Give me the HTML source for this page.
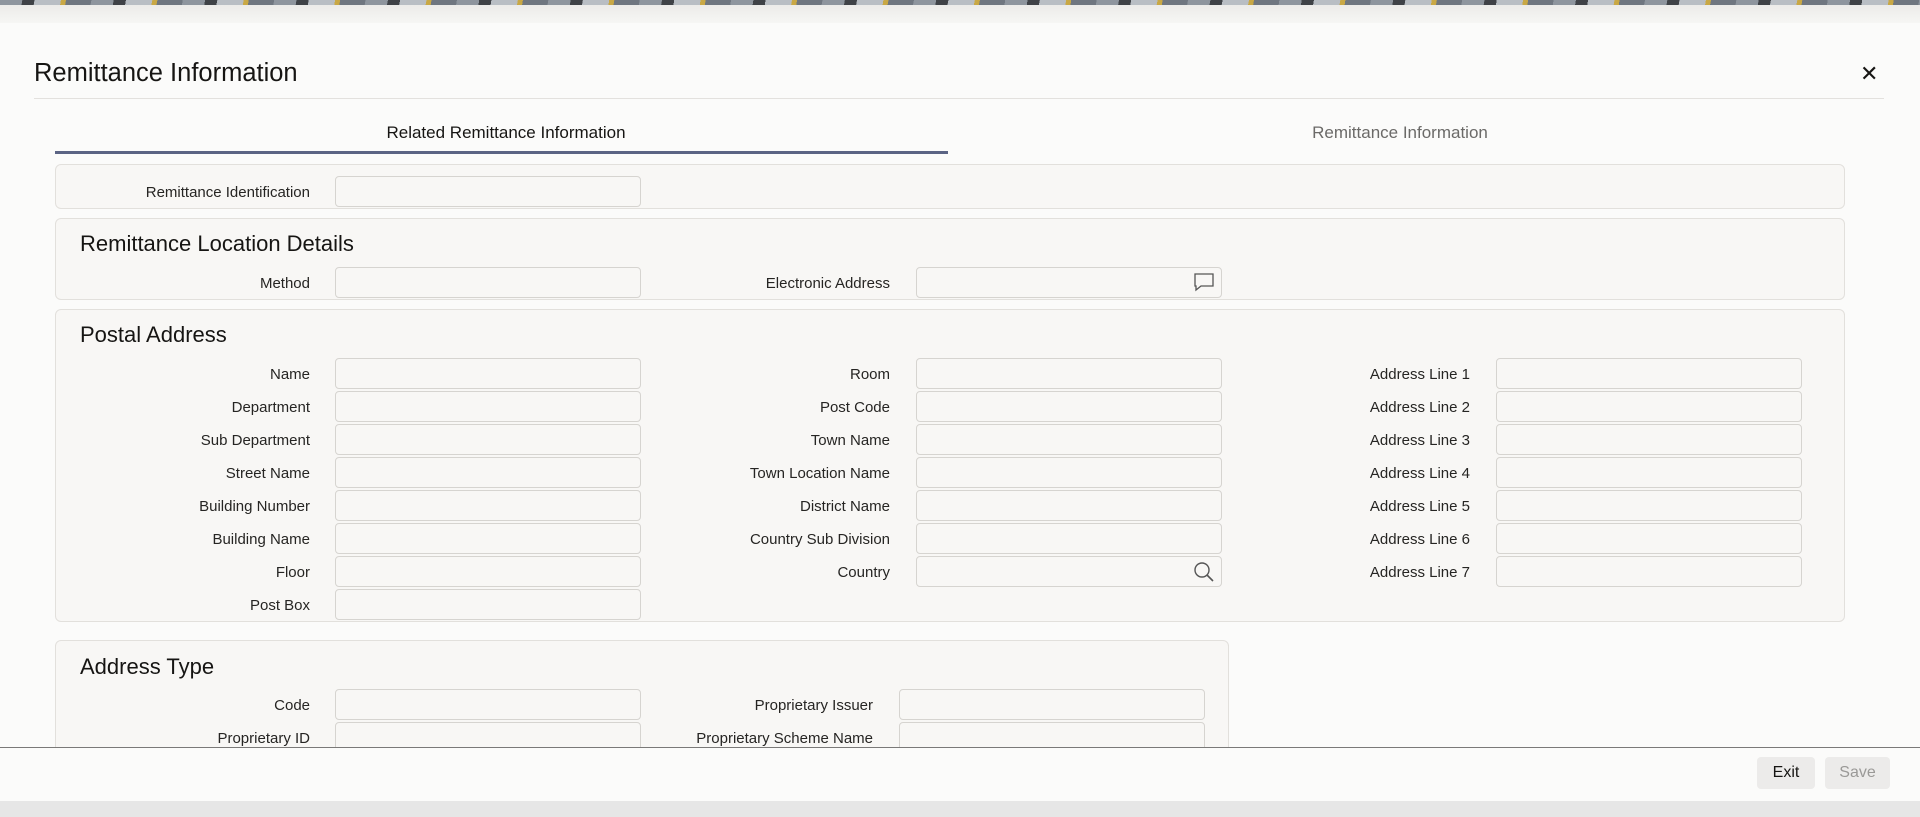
<!DOCTYPE html>
<html><head><meta charset="utf-8"><style>
*{box-sizing:border-box;margin:0;padding:0}
body{width:1920px;height:817px;overflow:hidden;background:#fbfbfa;font-family:"Liberation Sans",sans-serif;color:#161513;position:relative}
.banner{position:absolute;left:0;top:0;width:1920px;height:5px;background:repeating-linear-gradient(100deg,#8e959e 0 22px,#3f4247 22px 34px,#b9bec4 34px 60px,#c9a845 60px 65px,#6f7680 65px 90px)}
.strip{position:absolute;left:0;top:5px;width:1920px;height:18px;background:linear-gradient(#ecebe9,#f6f6f4)}
.abs{position:absolute}
.title{left:34px;top:59px;font-size:25.5px}
.hdiv{left:34px;top:98px;width:1850px;height:1px;background:#e3e1de}
.close{left:1860px;top:62px;font-size:22px;line-height:24px;font-weight:300}
.tab{top:123px;font-size:17px;text-align:center}
.uline{left:55px;top:151px;width:893px;height:3px;background:#5b6484}
.panel{position:absolute;background:#f8f7f5;border:1px solid #e2e0dc;border-radius:6px}
.h{position:absolute;font-size:22px}
.lbl{position:absolute;font-size:15px;text-align:right;width:300px;line-height:31px;color:#262523}
.inp{position:absolute;width:306px;height:31px;background:#f8f7f5;border:1px solid #d6d4d0;border-radius:4px}
.foot{left:0;top:747px;width:1920px;height:1px;background:#7a7978}
.fbar{left:0;top:801px;width:1920px;height:16px;background:#e6e6e6}
.btn{position:absolute;top:757px;height:32px;border-radius:4px;background:#ecebea;font-size:16px;line-height:32px;text-align:center}
</style></head><body>
<div class="banner"></div><div class="strip"></div>
<div class="abs title">Remittance Information</div>
<div class="abs hdiv"></div>
<div class="abs close">&#x2715;</div>
<div class="abs tab" style="left:306px;width:400px">Related Remittance Information</div>
<div class="abs tab" style="left:1200px;width:400px;color:#6b6a68">Remittance Information</div>
<div class="abs uline"></div>

<div class="panel" style="left:55px;top:164px;width:1790px;height:45px"></div>
<div class="lbl" style="left:10px;top:177px">Remittance Identification</div>
<div class="inp" style="left:335px;top:176px"></div>

<div class="panel" style="left:55px;top:218px;width:1790px;height:82px"></div>
<div class="h" style="left:80px;top:231px">Remittance Location Details</div>
<div class="lbl" style="left:10px;top:268px">Method</div>
<div class="inp" style="left:335px;top:267px"></div>
<div class="lbl" style="left:590px;top:268px">Electronic Address</div>
<div class="inp" style="left:916px;top:267px"></div>
<svg class="abs" style="left:1193px;top:272px" width="22" height="20" viewBox="0 0 22 20"><path d="M2 2h18v12H8l-5 4v-4H2z" fill="none" stroke="#555" stroke-width="1.3"/></svg>

<div class="panel" style="left:55px;top:309px;width:1790px;height:313px"></div>
<div class="h" style="left:80px;top:322px">Postal Address</div>

<div class="panel" style="left:55px;top:640px;width:1174px;height:140px"></div>
<div class="h" style="left:80px;top:654px">Address Type</div>
<div class="lbl" style="left:10px;top:690px">Code</div>
<div class="inp" style="left:335px;top:689px"></div>
<div class="lbl" style="left:573px;top:690px">Proprietary Issuer</div>
<div class="inp" style="left:899px;top:689px"></div>
<div class="lbl" style="left:10px;top:723px">Proprietary ID</div>
<div class="inp" style="left:335px;top:722px"></div>
<div class="lbl" style="left:573px;top:723px">Proprietary Scheme Name</div>
<div class="inp" style="left:899px;top:722px"></div>

<div class="abs" style="left:0;top:748px;width:1920px;height:53px;background:#fbfbfa"></div>
<div class="abs foot"></div>
<div class="abs fbar"></div>
<div class="btn" style="left:1757px;width:58px">Exit</div>
<div class="btn" style="left:1825px;width:65px;color:#9a9997">Save</div>

<div class="lbl" style="left:10px;top:359px">Name</div><div class="inp" style="left:335px;top:358px"></div>
<div class="lbl" style="left:10px;top:392px">Department</div><div class="inp" style="left:335px;top:391px"></div>
<div class="lbl" style="left:10px;top:425px">Sub Department</div><div class="inp" style="left:335px;top:424px"></div>
<div class="lbl" style="left:10px;top:458px">Street Name</div><div class="inp" style="left:335px;top:457px"></div>
<div class="lbl" style="left:10px;top:491px">Building Number</div><div class="inp" style="left:335px;top:490px"></div>
<div class="lbl" style="left:10px;top:524px">Building Name</div><div class="inp" style="left:335px;top:523px"></div>
<div class="lbl" style="left:10px;top:557px">Floor</div><div class="inp" style="left:335px;top:556px"></div>
<div class="lbl" style="left:10px;top:590px">Post Box</div><div class="inp" style="left:335px;top:589px"></div>

<div class="lbl" style="left:590px;top:359px">Room</div><div class="inp" style="left:916px;top:358px"></div>
<div class="lbl" style="left:590px;top:392px">Post Code</div><div class="inp" style="left:916px;top:391px"></div>
<div class="lbl" style="left:590px;top:425px">Town Name</div><div class="inp" style="left:916px;top:424px"></div>
<div class="lbl" style="left:590px;top:458px">Town Location Name</div><div class="inp" style="left:916px;top:457px"></div>
<div class="lbl" style="left:590px;top:491px">District Name</div><div class="inp" style="left:916px;top:490px"></div>
<div class="lbl" style="left:590px;top:524px">Country Sub Division</div><div class="inp" style="left:916px;top:523px"></div>
<div class="lbl" style="left:590px;top:557px">Country</div><div class="inp" style="left:916px;top:556px"></div>
<svg class="abs" style="left:1193px;top:561px" width="22" height="22" viewBox="0 0 22 22"><circle cx="9" cy="9" r="7" fill="none" stroke="#555" stroke-width="1.4"/><path d="M14 14l6 6" stroke="#555" stroke-width="1.6"/></svg>

<div class="lbl" style="left:1170px;top:359px">Address Line 1</div><div class="inp" style="left:1496px;top:358px"></div>
<div class="lbl" style="left:1170px;top:392px">Address Line 2</div><div class="inp" style="left:1496px;top:391px"></div>
<div class="lbl" style="left:1170px;top:425px">Address Line 3</div><div class="inp" style="left:1496px;top:424px"></div>
<div class="lbl" style="left:1170px;top:458px">Address Line 4</div><div class="inp" style="left:1496px;top:457px"></div>
<div class="lbl" style="left:1170px;top:491px">Address Line 5</div><div class="inp" style="left:1496px;top:490px"></div>
<div class="lbl" style="left:1170px;top:524px">Address Line 6</div><div class="inp" style="left:1496px;top:523px"></div>
<div class="lbl" style="left:1170px;top:557px">Address Line 7</div><div class="inp" style="left:1496px;top:556px"></div>
</body></html>
